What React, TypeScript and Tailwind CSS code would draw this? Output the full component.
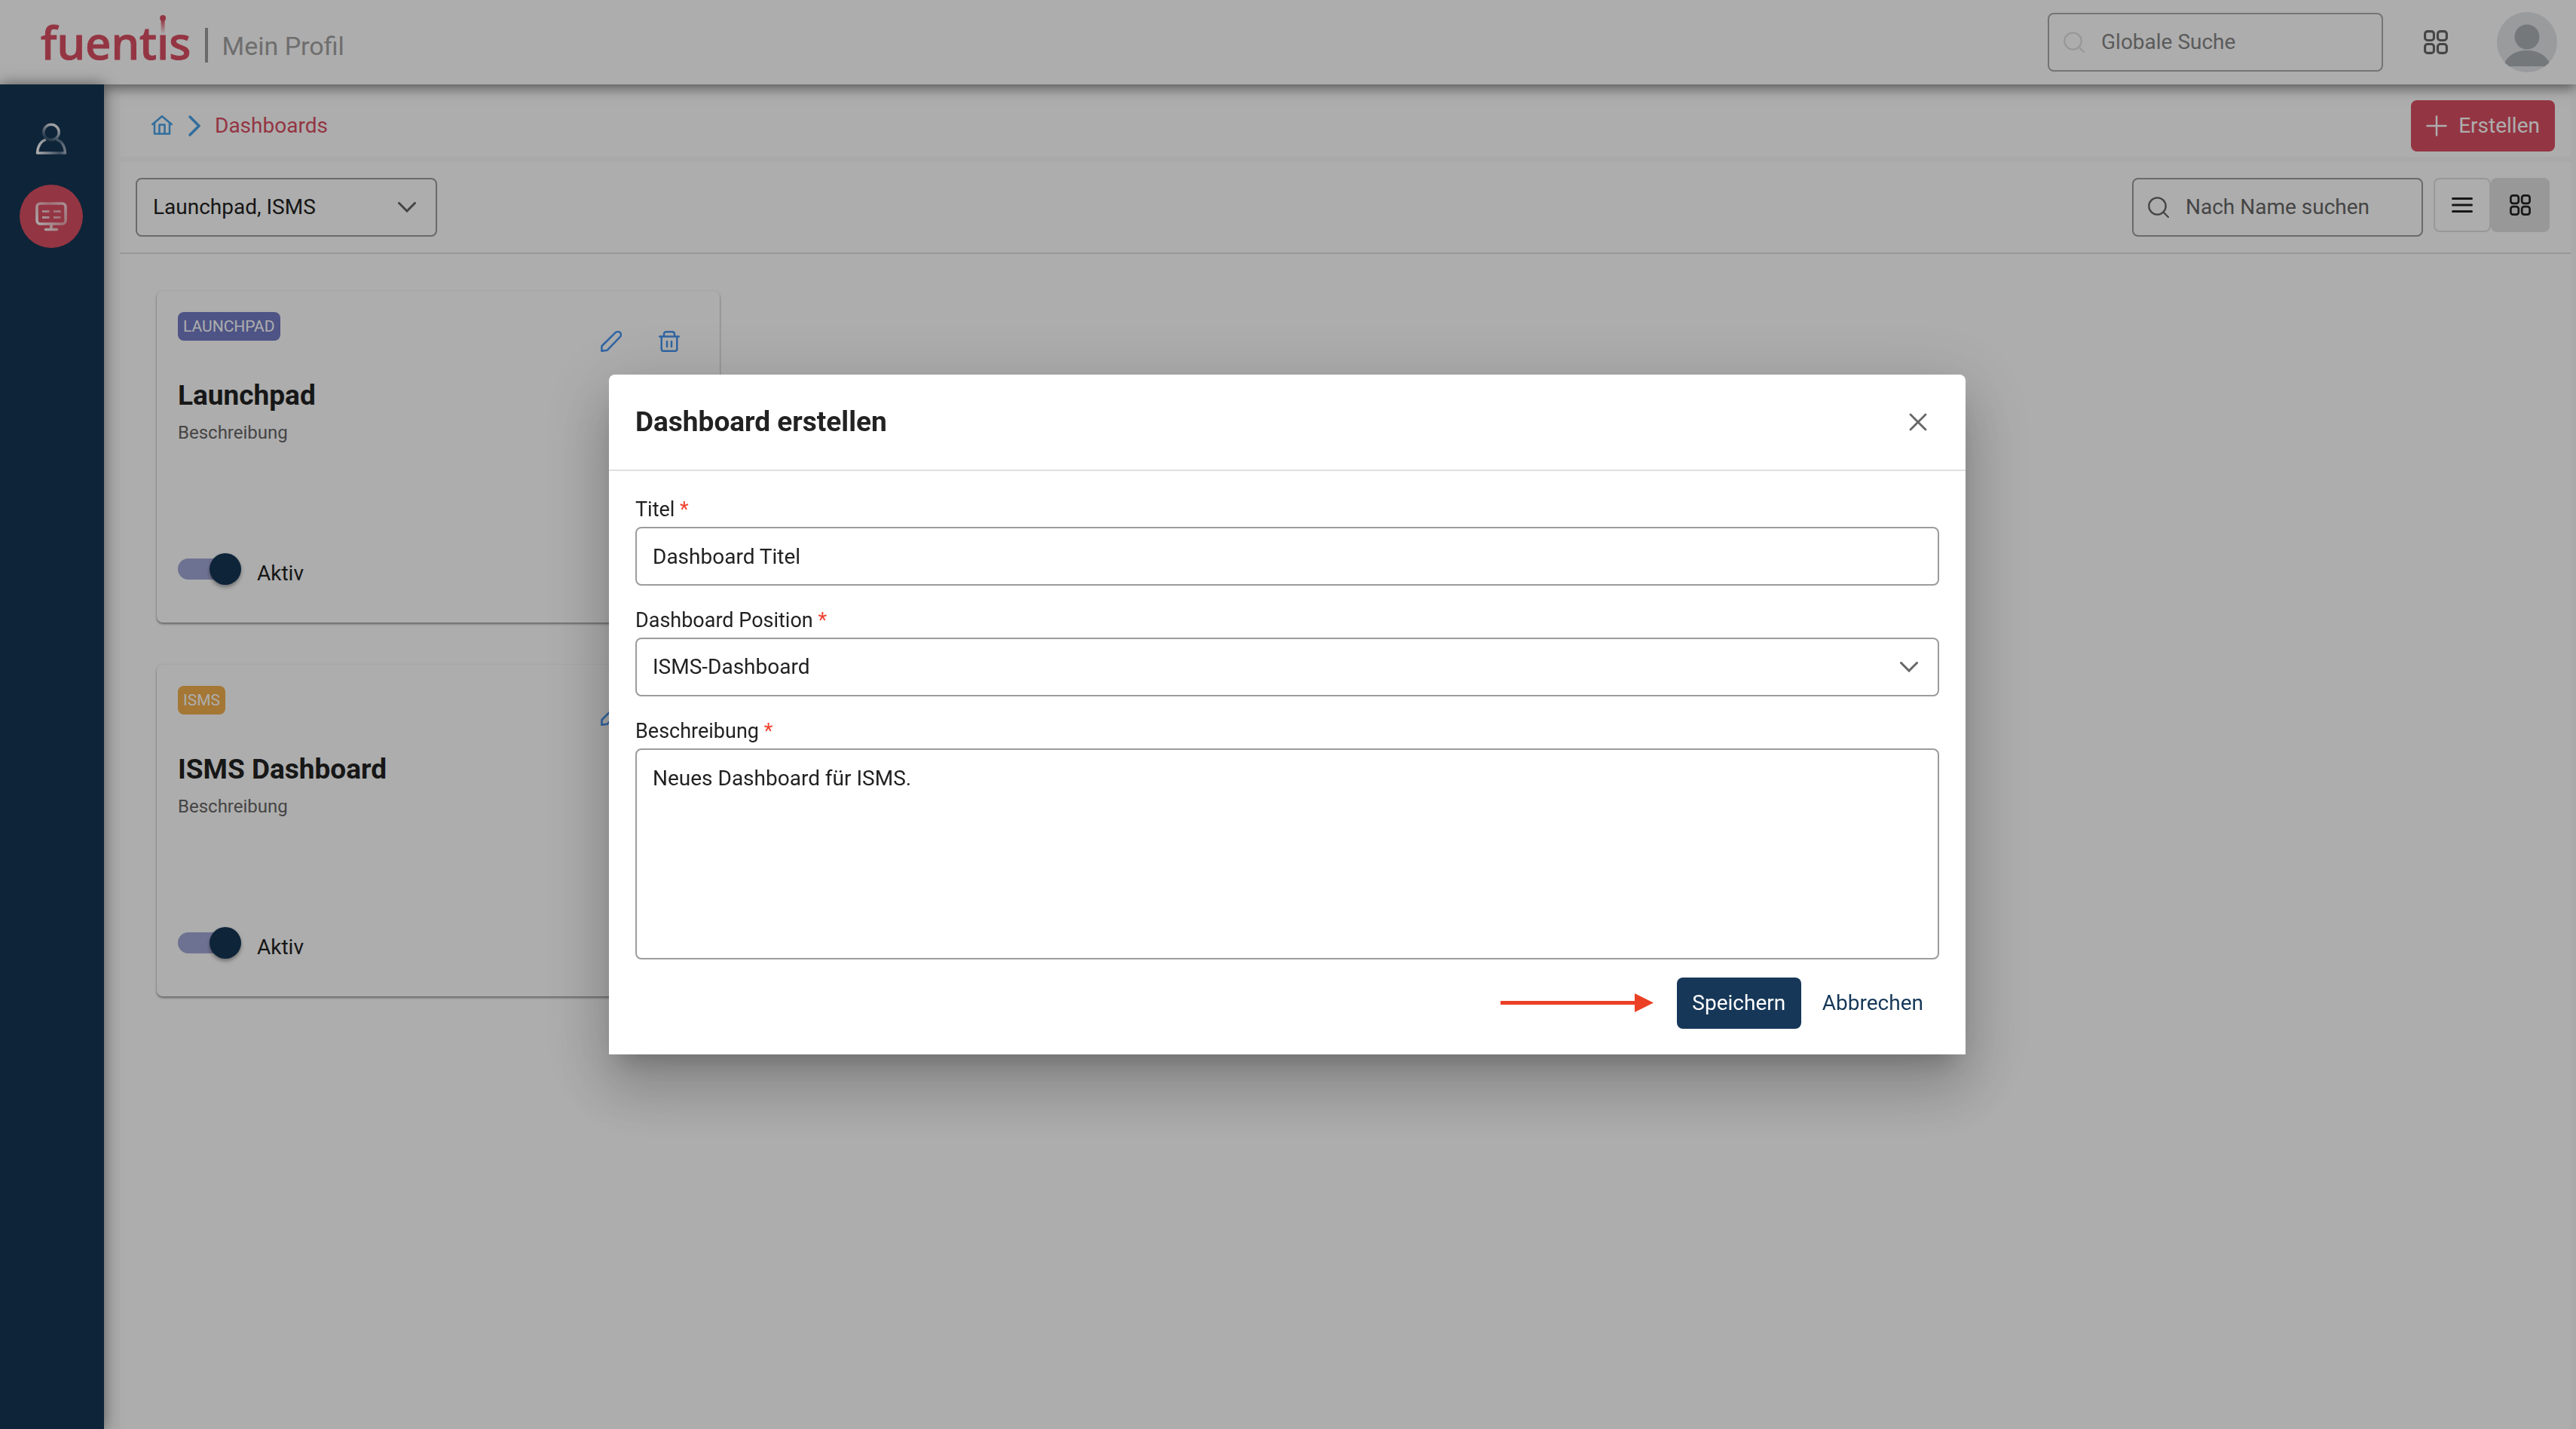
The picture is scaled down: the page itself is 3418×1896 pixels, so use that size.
import { useState } from 'react'

const DASHBOARDS = [
    { id: 'launchpad', tag: 'LAUNCHPAD', tagClass: 'bg-[#747dc6]', title: 'Launchpad', text: 'Beschreibung' },
    { id: 'isms', tag: 'ISMS', tagClass: 'bg-[#f2b04e]', title: 'ISMS Dashboard', text: 'Beschreibung' },
]

const fieldClass = 'w-full rounded-[8px] border-2 border-[#9c9c9c] bg-white px-[21px] text-[28px] text-[#222]'
const labelClass = 'mb-[5px] block text-[27px] leading-[36px] text-[#222]'

function SearchIcon({ className }: { className: string }) {
    return (
        <svg className={className} viewBox="0 0 28 28" fill="none" stroke="currentColor" strokeWidth="2.300" strokeLinecap="round">
            <circle cx="12.500" cy="12.500" r="11.200" />
            <path d="M20.500 20.500 L27 27" />
        </svg>
    )
}

function GridIcon({ className }: { className: string }) {
    return (
        <svg className={className} viewBox="0 0 28 28" fill="none" stroke="currentColor" strokeWidth="2.700">
            <rect x="1.400" y="1.400" width="10.400" height="10.400" rx="3" />
            <rect x="16.200" y="1.400" width="10.400" height="10.400" rx="3" />
            <rect x="1.400" y="16.200" width="10.400" height="10.400" rx="3" />
            <rect x="16.200" y="16.200" width="10.400" height="10.400" rx="3" />
        </svg>
    )
}

function ChevronDown({ className }: { className: string }) {
    return (
        <svg className={className} viewBox="0 0 24 14" fill="none" stroke="currentColor" strokeWidth="3" strokeLinecap="round">
            <path d="M1.500 1.500 L12 12 L22.500 1.500" />
        </svg>
    )
}

function Logo() {
    return (
        <a
            href="#"
            className="flex font-['Noto_Sans',sans-serif] text-[60px] leading-[72px] font-medium text-[#da4f63] [-webkit-text-stroke:1px_#da4f63]"
        >
            <span>fuent</span>
            <span className="relative">
                i
                {/* long fading stem above the i */}
                <svg className="absolute top-0 left-0 h-[25px] w-full" viewBox="0 0 16 25">
                    <defs>
                        <linearGradient id="stem" x1="0" y1="0" x2="0" y2="1">
                            <stop offset="0" stopColor="#da4f63" />
                            <stop offset="1" stopColor="#da4f63" stopOpacity="0.050" />
                        </linearGradient>
                    </defs>
                    <rect x="0" y="0" width="16" height="25" fill="#fff" />
                    <rect x="5.500" y="6" width="5" height="19" fill="url(#stem)" />
                    <circle cx="8" cy="4" r="4" fill="#da4f63" />
                </svg>
            </span>
            <span>s</span>
        </a>
    )
}

function Header() {
    return (
        <header className="relative z-10 flex h-[112px] items-center justify-between bg-white pr-[25px] pl-[54px] shadow-[0_4px_16px_rgba(0,0,0,0.5)]">
            <div className="flex items-center">
                <Logo />
                <div className="mt-2 ml-[19px] h-[46px] w-[4px] bg-[#9c9c9c]" />
                <h1 className="mt-[10px] ml-[18px] text-[34px] leading-[40px] text-[#a3a3a3]">Mein Profil</h1>
            </div>
            <div className="flex items-center">
                <label className="flex h-[78px] w-[445px] items-center rounded-[8px] border-2 border-[#acacac] pl-[19px] text-[28px]">
                    <SearchIcon className="h-7 w-7 shrink-0 text-[#e0e0e0]" />
                    <input
                        type="search"
                        aria-label="Globale Suche"
                        placeholder="Globale Suche"
                        className="ml-[22px] min-w-0 flex-1 outline-none placeholder:text-[#878787]"
                    />
                </label>
                <button type="button" aria-label="Anwendungen" className="ml-[54px]">
                    <GridIcon className="h-8 w-8 text-[#666]" />
                </button>
                <button type="button" aria-label="Benutzer" className="ml-[65px] h-20 w-20 overflow-hidden rounded-full">
                    <svg viewBox="0 0 80 80">
                        <rect width="80" height="80" fill="#e2e5e8" />
                        <circle cx="40" cy="33" r="16.500" fill="#abb2b6" />
                        <path d="M9 72 C12 58 25 51 40 51 C55 51 68 58 71 72 Z" fill="#abb2b6" />
                    </svg>
                </button>
            </div>
        </header>
    )
}

function Sidebar() {
    return (
        <nav className="relative z-20 flex w-[138px] shrink-0 flex-col items-center gap-10 bg-[#153655] pt-[51px] pr-[2px] shadow-[0_0_18px_rgba(0,0,0,0.5)]">
            <a href="#" aria-label="Profil" className="h-[42px]">
                <svg className="h-[42px] w-[42px]" viewBox="0 0 42 42" fill="none" strokeWidth="3.400" strokeLinejoin="round">
                    <defs>
                        <linearGradient id="person" x1="0" y1="0" x2="1" y2="0">
                            <stop offset="0" stopColor="#fff" />
                            <stop offset="0.800" stopColor="#5c7590" />
                            <stop offset="1" stopColor="#a5b1be" />
                        </linearGradient>
                        <linearGradient id="head" x1="1" y1="0" x2="0.400" y2="1">
                            <stop offset="0.200" stopColor="#e8ebee" />
                            <stop offset="1" stopColor="#3a5671" />
                        </linearGradient>
                    </defs>
                    <path d="M14 22 C6 25 3 32 2.500 40 L39.500 40 C39 32 36 25 28 22" stroke="url(#person)" />
                    <circle cx="21" cy="12.500" r="10.200" stroke="url(#head)" />
                </svg>
            </a>
            <a href="#" aria-label="Dashboards" className="flex h-[84px] w-[84px] items-center justify-center rounded-full bg-[#da4f63]">
                <svg className="h-[40px] w-[42px]" viewBox="0 0 42 40" fill="none" strokeLinecap="round">
                    <defs>
                        <linearGradient id="screen" gradientUnits="userSpaceOnUse" x1="0" y1="30" x2="42" y2="0">
                            <stop offset="0" stopColor="#fff" />
                            <stop offset="0.600" stopColor="#eba4ae" />
                            <stop offset="1" stopColor="#f9e2e5" />
                        </linearGradient>
                    </defs>
                    <rect x="2" y="3" width="38" height="27" rx="4.500" stroke="url(#screen)" strokeWidth="3.600" />
                    <path d="M9 13.500 H18.500 M24 13.500 H33.500 M9 21.500 H18.500 M24 21.500 H33.500" stroke="url(#screen)" strokeWidth="3.200" strokeLinecap="butt" />
                    <path d="M21 30 V36 M13.500 37.500 H28.500" stroke="url(#screen)" strokeWidth="3.600" />
                </svg>
            </a>
        </nav>
    )
}

function Card({ item }: { item: (typeof DASHBOARDS)[number] }) {
    const [active, setActive] = useState(true)

    return (
        <article className="flex h-[440px] w-[747px] flex-col rounded-[8px] bg-white p-7 shadow-[0_2px_3px_rgba(0,0,0,0.4),0_0_3px_rgba(0,0,0,0.08)]">
            <div className="flex h-[70px] items-start justify-between">
                <span className={`rounded-[8px] px-[7px] text-[21px] leading-[38px] text-white ${item.tagClass}`}>{item.tag}</span>
                <div className="mt-[25px] mr-[25px] flex gap-[49px] text-[#4894f0]">
                    <button type="button" aria-label="Bearbeiten">
                        <svg className="h-7 w-7" viewBox="0 0 28 28" fill="none" stroke="currentColor" strokeWidth="2.500" strokeLinejoin="round">
                            <path d="M1.300 26.700 L1.600 20 L19.500 2.300 C21.500 0.700 24.500 0.800 26 2.400 C27.400 4.200 27.200 6.200 25.600 8.200 L8.500 25.800 Z" />
                        </svg>
                    </button>
                    <button type="button" aria-label="Löschen">
                        <svg className="h-7 w-7" viewBox="0 0 28 28" fill="none" stroke="currentColor" strokeWidth="2.500" strokeLinecap="round">
                            <path d="M1.200 7.500 H26.800 M7 7 V4.500 C7 2.300 8 1.200 10 1.200 H18 C20 1.200 21 2.300 21 4.500 V7" />
                            <path d="M3.700 8 V24 C3.700 26 4.500 26.800 6.500 26.800 H21.500 C23.500 26.800 24.300 26 24.300 24 V8" />
                            <path d="M11 14 V21 M17 14 V21" />
                        </svg>
                    </button>
                </div>
            </div>
            <h2 className="mt-[18px] text-[37px] leading-[46px] font-bold text-[#222]">{item.title}</h2>
            <p className="mt-[10px] text-[24px] leading-[32px] text-[#666]">{item.text}</p>
            <label className="mt-auto flex items-start gap-[33px] pb-[15px] text-[28px] leading-[44px] text-[#222]">
                <input
                    type="checkbox"
                    role="switch"
                    checked={active}
                    onChange={(e) => setActive(e.target.checked)}
                    className="relative mt-[2px] h-7 w-[72px] appearance-none rounded-full bg-[#a3a8d7] before:absolute before:-top-[7px] before:left-0 before:h-[42px] before:w-[42px] before:rounded-full before:bg-[#153655] before:shadow-[0_3px_5px_rgba(0,0,0,0.35)] checked:before:left-[42px]"
                />
                Aktiv
            </label>
        </article>
    )
}

function Dialog() {
    const [title, setTitle] = useState('Dashboard Titel')
    const [text, setText] = useState('Neues Dashboard für ISMS.')

    return (
        <div className="fixed inset-0 z-30 flex items-center justify-center bg-black/32 pr-[2px]">
            <form
                role="dialog"
                aria-labelledby="dialog-title"
                className="w-[1800px] max-w-full rounded-t-[8px] bg-white shadow-[0_22px_30px_-14px_rgba(0,0,0,0.2),0_48px_76px_6px_rgba(0,0,0,0.14),0_18px_92px_16px_rgba(0,0,0,0.12)]"
                onSubmit={(e) => e.preventDefault()}
            >
                <div className="flex h-[128px] items-center justify-between border-b-2 border-[#e0e0e0] pr-[51px] pl-[35px]">
                    <h2 id="dialog-title" className="text-[37px] leading-[46px] font-bold text-[#222]">Dashboard erstellen</h2>
                    <button type="button" aria-label="Schließen">
                        <svg className="h-6 w-6" viewBox="0 0 24 24" stroke="#666" strokeWidth="2.800" strokeLinecap="round">
                            <path d="M2 2 L22 22 M22 2 L2 22" />
                        </svg>
                    </button>
                </div>

                <div className="px-[35px] pt-[33px] pb-[34px]">
                    <label htmlFor="title" className={labelClass}>
                        Titel <span className="text-[#f0402c]">*</span>
                    </label>
                    <input id="title" className={`${fieldClass} block h-[78px]`} value={title} onChange={(e) => setTitle(e.target.value)} />

                    <label htmlFor="position" className={`${labelClass} mt-7`}>
                        Dashboard Position <span className="text-[#f0402c]">*</span>
                    </label>
                    <div className="relative">
                        <select id="position" className={`${fieldClass} block h-[78px] appearance-none`}>
                            <option>ISMS-Dashboard</option>
                        </select>
                        <ChevronDown className="pointer-events-none absolute top-8 right-7 h-[14px] w-6 text-[#666]" />
                    </div>

                    <label htmlFor="text" className={`${labelClass} mt-7`}>
                        Beschreibung <span className="text-[#f0402c]">*</span>
                    </label>
                    <textarea
                        id="text"
                        className={`${fieldClass} block h-[280px] resize-none py-5 leading-[36px]`}
                        value={text}
                        onChange={(e) => setText(e.target.value)}
                    />

                    <div className="mt-6 flex items-center justify-end text-[28px]">
                        <svg className="mr-[31px] h-[26px] w-[203px]" viewBox="0 0 203 26" fill="#ec4024">
                            <rect x="0" y="10" width="180" height="5" />
                            <path d="M178 0 L203 12.500 L178 25 Z" />
                        </svg>
                        <button type="submit" className="h-[68px] w-[165px] rounded-[8px] bg-[#163758] text-white">Speichern</button>
                        <button type="button" className="ml-[6px] h-[68px] pr-[21px] pl-[22px] text-[#163758]">Abbrechen</button>
                    </div>
                </div>
            </form>
        </div>
    )
}

export default function App() {
    return (
        <div className="flex min-h-screen flex-col bg-[#fafafa] font-['Roboto',sans-serif]">
            <Header />
            <div className="flex flex-1">
                <Sidebar />
                <main className="flex flex-1 flex-col pt-[14px] pr-[7px] pl-[21px]">
                    <div className="flex h-[82px] items-center justify-between bg-white pr-[21px] pl-[42px] text-[28px]">
                        <nav className="flex items-center">
                            <a href="#" aria-label="Start">
                                <svg className="h-7 w-7" viewBox="0 0 28 28" fill="none" stroke="#4aa3e8" strokeWidth="2.500" strokeLinejoin="round" strokeLinecap="round">
                                    <path d="M1.300 12 L14 1.300 L26.700 12" />
                                    <path d="M4 10.500 V24.500 H24 V10.500" />
                                    <path d="M10.500 24.500 V12.500 H17.500 V24.500" />
                                </svg>
                            </a>
                            <svg className="ml-[21px] h-7 w-4" viewBox="0 0 16 28" fill="none" stroke="#4aa3e8" strokeWidth="3.400" strokeLinecap="round">
                                <path d="M2 2 L14 14 L2 26" />
                            </svg>
                            <a href="#" className="ml-[19px] text-[#da4f63]">Dashboards</a>
                        </nav>
                        <button type="button" className="flex h-[68px] items-center gap-[15px] rounded-[8px] bg-[#da4f63] px-[20px] text-white">
                            <svg className="h-7 w-7" viewBox="0 0 28 28" stroke="currentColor" strokeWidth="2.500" strokeLinecap="round">
                                <path d="M14 1.500 V26.500 M1.500 14 H26.500" />
                            </svg>
                            Erstellen
                        </button>
                    </div>

                    <div className="mt-[7px] flex h-[122px] justify-between border-b-2 border-[#e0e0e0] bg-white pt-[21px] pr-[28px] pl-[21px]">
                        <div className="relative h-[78px] w-[400px]">
                            <select
                                aria-label="Dashboard Position filtern"
                                className="h-[78px] w-full appearance-none rounded-[8px] border-2 border-[#9c9c9c] pl-[21px] text-[28px] text-[#222]"
                            >
                                <option>Launchpad, ISMS</option>
                            </select>
                            <ChevronDown className="pointer-events-none absolute top-8 right-7 h-[14px] w-6 text-[#666]" />
                        </div>
                        <div className="flex items-start">
                            <label className="flex h-[78px] w-[386px] items-center rounded-[8px] border-2 border-[#9c9c9c] pl-[19px] text-[28px]">
                                <SearchIcon className="h-7 w-7 shrink-0 text-[#666]" />
                                <input
                                    type="search"
                                    aria-label="Nach Name suchen"
                                    placeholder="Nach Name suchen"
                                    className="ml-[22px] min-w-0 flex-1 outline-none placeholder:text-[#666]"
                                />
                            </label>
                            <button
                                type="button"
                                aria-label="Liste"
                                className="ml-[14px] flex h-[72px] w-[76px] items-center justify-center rounded-[8px] border-2 border-[#e0e0e0] text-[#222]"
                            >
                                <svg className="h-7 w-7" viewBox="0 0 28 28" stroke="currentColor" strokeWidth="3" strokeLinecap="round">
                                    <path d="M1.500 5.500 H26.500 M1.500 14 H26.500 M1.500 22.500 H26.500" />
                                </svg>
                            </button>
                            <button
                                type="button"
                                aria-label="Kacheln"
                                aria-pressed="true"
                                className="flex h-[72px] w-[78px] items-center justify-center rounded-[8px] bg-[#e0e0e0] text-[#222]"
                            >
                                <GridIcon className="h-7 w-7" />
                            </button>
                        </div>
                    </div>

                    <section className="flex flex-1 flex-col gap-14 bg-white pt-[49px] pl-[49px]">
                        {DASHBOARDS.map((item) => (
                            <Card key={item.id} item={item} />
                        ))}
                    </section>
                </main>
            </div>
            <Dialog />
        </div>
    )
}
